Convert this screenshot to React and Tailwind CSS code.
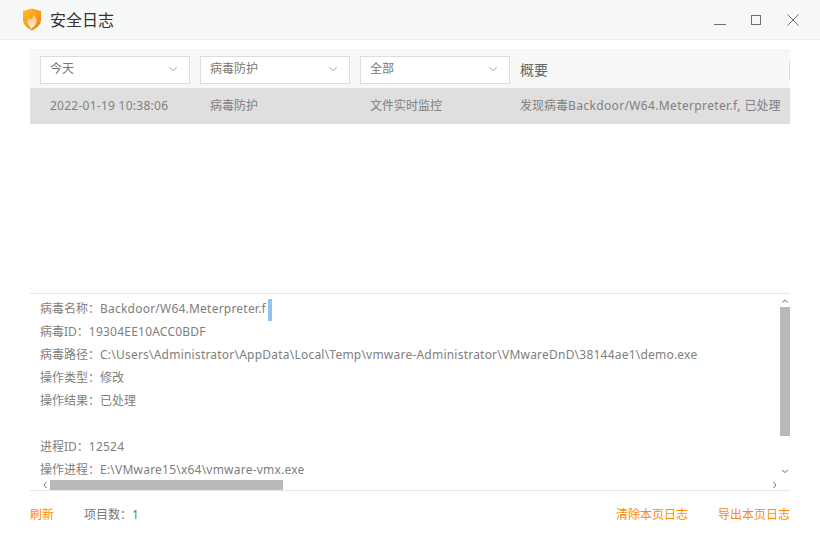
import { ChevronDown } from "lucide-react";

const FONT = { fontFamily: '"Noto Sans", "Noto Sans CJK SC", sans-serif' };

function Logo() {
  return (
    <svg width="20" height="23" viewBox="0 0 20 23">
      <defs>
        <linearGradient id="shield" x1="0" y1="0" x2="1" y2="1">
          <stop offset="0" stopColor="#ffc21f" />
          <stop offset="1" stopColor="#f57a12" />
        </linearGradient>
        <linearGradient id="flame" x1="0" y1="0" x2="0" y2="1">
          <stop offset="0" stopColor="#ffb347" />
          <stop offset="1" stopColor="#fff6e8" />
        </linearGradient>
      </defs>
      <path d="M1 3 L10 0.5 L19 3 L19 12 C19 17 14 20.5 10 22.5 C6 20.5 1 17 1 12 Z" fill="url(#shield)" />
      <path d="M12 4 C12 8 15.5 10 14.5 14 C13.8 17 11.5 19 8.5 21 C9.5 18.5 6 17.5 5.5 14.5 C5.2 12.5 6.5 11 7.5 9.5 C7.8 10.5 8.3 11 9 11.5 C10.5 9.5 12 7 12 4 Z" fill="url(#flame)" />
    </svg>
  );
}

function Select({ label }) {
  return (
    <div className="w-[150px] h-[28px] bg-white border border-[#dcdcdc] flex items-center justify-between pl-[9px] pr-[9px] pb-[2px] text-[12px] text-[#777]">
      <span>{label}</span>
      <ChevronDown size={14} strokeWidth={1} className="text-[#666] mt-[1px]" />
    </div>
  );
}

// latin values run a bit wider than the installed font, hence the tracking
const details = [
  { label: "病毒名称：", value: "Backdoor/W64.Meterpreter.f", latin: true },
  { label: "病毒ID：", value: "19304EE10ACC0BDF", latin: true },
  {
    label: "病毒路径：",
    value: "C:\\Users\\Administrator\\AppData\\Local\\Temp\\vmware-Administrator\\VMwareDnD\\38144ae1\\demo.exe",
    latin: true,
  },
  { label: "操作类型：", value: "修改" },
  { label: "操作结果：", value: "已处理" },
  { label: "\u00a0", value: "" },
  { label: "进程ID：", value: "12524", latin: true },
  { label: "操作进程：", value: "E:\\VMware15\\x64\\vmware-vmx.exe", latin: true },
];

export default function App() {
  return (
    <div className="w-[820px] h-[540px] bg-white flex flex-col overflow-hidden" style={FONT}>
      {/* title bar */}
      <div className="h-[40px] shrink-0 bg-[#f7f9f8] border-b border-[#ececec] flex items-center pl-[22px]">
        <Logo />
        <span className="ml-[8px] text-[16px] text-[#333]">安全日志</span>
        <div className="ml-auto flex items-center text-[#707070]">
          <svg width="14" height="14" viewBox="0 0 14 14" className="mr-[23px]">
            <path d="M1 11.5 H13" stroke="currentColor" fill="none" />
          </svg>
          <svg width="12" height="12" viewBox="0 0 12 12" className="mr-[24px]">
            <rect x="1.5" y="1.5" width="9" height="9" stroke="currentColor" fill="none" />
          </svg>
          <svg width="14" height="14" viewBox="0 0 14 14" className="mr-[20px]">
            <path d="M1.5 1.5 L12.5 12.5 M12.5 1.5 L1.5 12.5" stroke="currentColor" fill="none" />
          </svg>
        </div>
      </div>

      <div className="flex-1 flex flex-col px-[30px] pt-[10px]">
        {/* table */}
        <div className="h-[243px] shrink-0">
          <div className="h-[38px] bg-[#f7f9f8] border-t border-[#eeeeee] flex items-center pl-[10px]">
            <div className="flex gap-[10px]">
              <Select label="今天" />
              <Select label="病毒防护" />
              <Select label="全部" />
            </div>
            <span className="ml-[10px] text-[14px] text-[#666]">概要</span>
            <div className="ml-auto w-px h-[20px] bg-[#dddddd]" />
          </div>
          <div className="h-[36px] bg-[#dfdfdf] flex items-center text-[12px] text-[#808080] whitespace-nowrap">
            <span className="w-[180px] pl-[20px] tracking-[0.26px]">2022-01-19 10:38:06</span>
            <span className="w-[160px]">病毒防护</span>
            <span className="w-[150px]">文件实时监控</span>
            <span>
              发现病毒<span className="tracking-[0.36px]">Backdoor/W64.Meterpreter.f, </span>已处理
            </span>
          </div>
        </div>

        {/* detail panel */}
        <div className="h-[198px] shrink-0 border-t border-b border-[#e8e8e8] flex flex-col">
          <div className="flex-1 flex min-h-0">
            <div className="flex-1 overflow-hidden pl-[10px] pt-[3px] text-[12px] leading-[23px] text-[#808080] whitespace-nowrap">
              {details.map((d, i) => (
                <div key={i} className="h-[23px]">
                  {d.label}
                  <span className={d.latin ? "tracking-[0.22px]" : ""}>{d.value}</span>
                  {i === 0 && <span className="inline-block w-[4px] h-[22px] ml-[2px] bg-[#90c5f0] align-middle" />}
                </div>
              ))}
            </div>
            <div className="w-[10px] flex flex-col items-center">
              <svg width="10" height="13" viewBox="0 0 10 13" className="shrink-0 text-[#777]">
                <path d="M2 8.5 L5 6 L8 8.5" stroke="currentColor" fill="none" />
              </svg>
              <div className="w-[10px] h-[129px] bg-[#b9b9b9]" />
              <svg width="10" height="13" viewBox="0 0 10 13" className="shrink-0 mt-auto mb-[2px] text-[#777]">
                <path d="M2 5 L5 7.5 L8 5" stroke="currentColor" fill="none" />
              </svg>
            </div>
          </div>
          <div className="h-[10px] shrink-0 flex items-center pl-[10px] pr-[10px]">
            <svg width="10" height="10" viewBox="0 0 10 10" className="shrink-0 text-[#777]">
              <path d="M6.5 2 L4 5 L6.5 8" stroke="currentColor" fill="none" />
            </svg>
            <div className="w-[233px] h-[10px] bg-[#b9b9b9]" />
            <svg width="10" height="10" viewBox="0 0 10 10" className="shrink-0 ml-auto text-[#777]">
              <path d="M3.5 2 L6 5 L3.5 8" stroke="currentColor" fill="none" />
            </svg>
          </div>
        </div>

        {/* footer */}
        <div className="flex-1 flex items-center text-[12px] pb-[2px]">
          <span className="text-[#ff8a00]">刷新</span>
          <span className="ml-[30px] text-[#777]">项目数：1</span>
          <span className="ml-auto text-[#ff8a00]">清除本页日志</span>
          <span className="ml-[30px] text-[#ff8a00]">导出本页日志</span>
        </div>
      </div>
    </div>
  );
}
